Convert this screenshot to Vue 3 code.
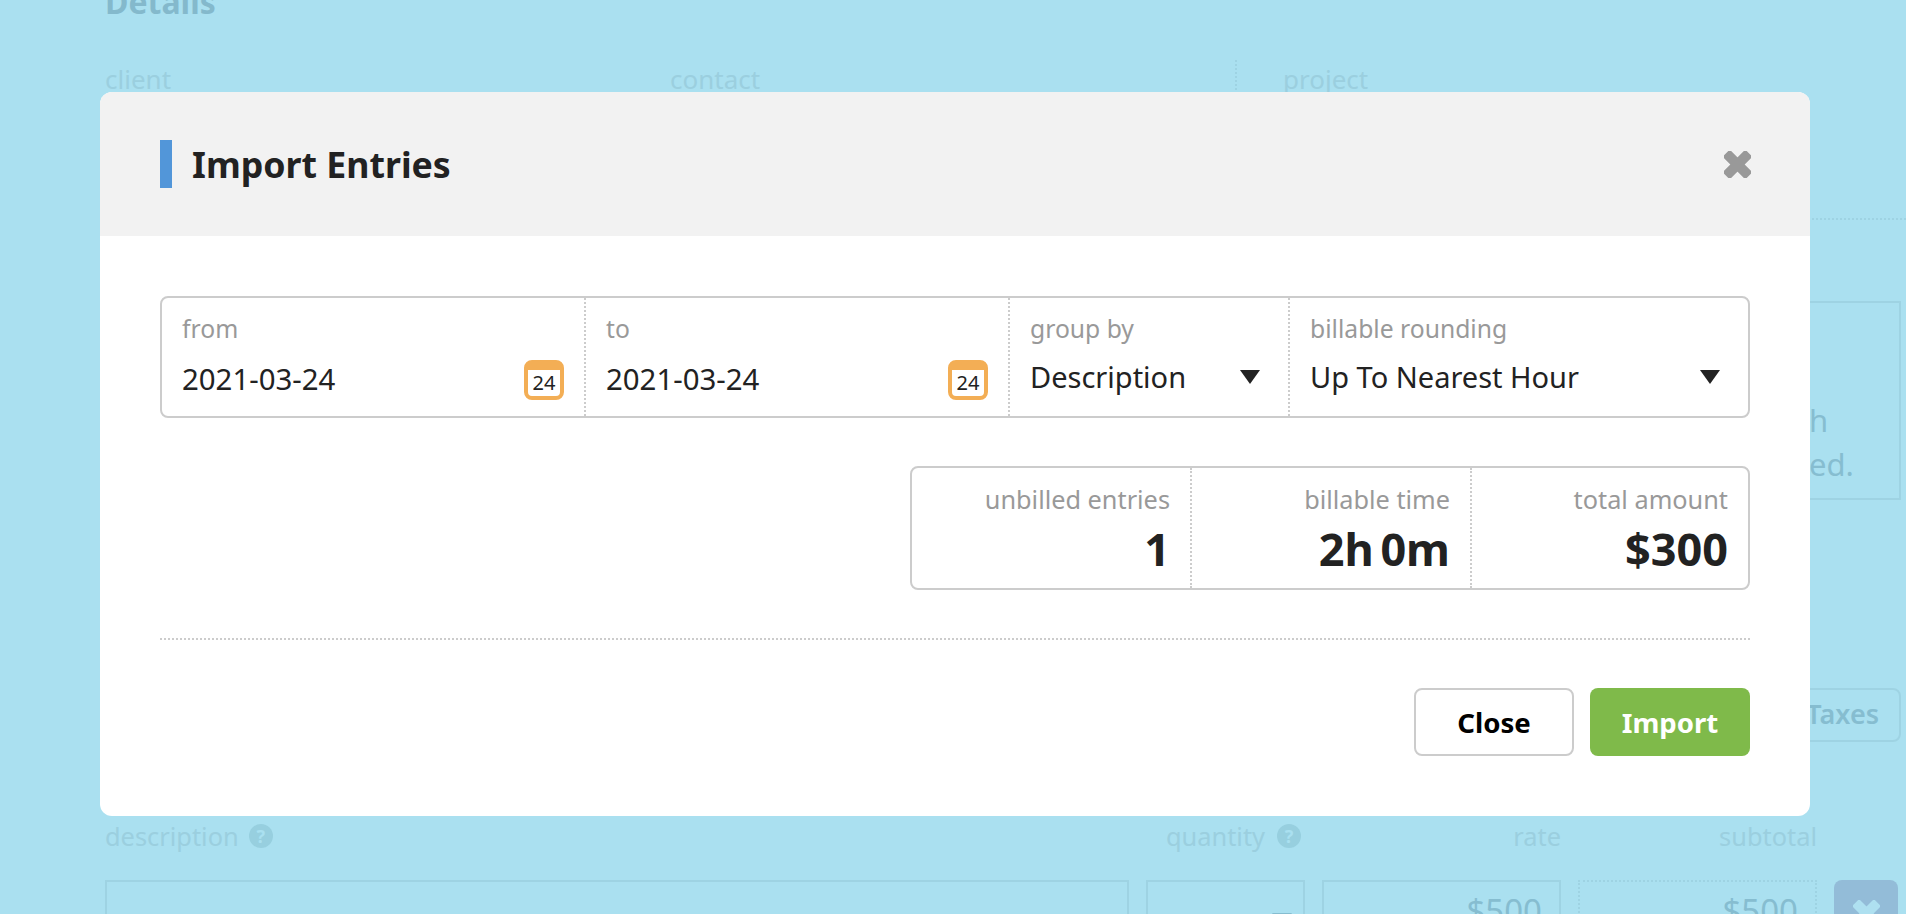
<script setup>
const fields = [
  { label: 'from', value: '2021-03-24' },
  { label: 'to', value: '2021-03-24' },
]
const selects = [
  { label: 'group by', value: 'Description' },
  { label: 'billable rounding', value: 'Up To Nearest Hour' },
]
const stats = [
  { label: 'unbilled entries', value: '1' },
  { label: 'billable time', value: '2h 0m' },
  { label: 'total amount', value: '$300' },
]
</script>

<template>
  <div class="page">
    <div class="sheet">
      <h2 class="details">Details</h2>
      <div class="info">
        <div class="info-cell"><span class="bg-label">client</span></div>
        <div class="info-cell"><span class="bg-label">contact</span></div>
        <div class="info-cell project"><span class="bg-label">project</span></div>
      </div>
      <div class="empty-box">
        <div>h</div>
        <div>ed.</div>
      </div>
      <div class="taxes">Taxes</div>
      <div class="table-grid heads">
        <div class="bg-label head-left">description <span class="help">?</span></div>
        <div class="bg-label head-right qty">quantity <span class="help">?</span></div>
        <div class="bg-label head-right">rate</div>
        <div class="bg-label head-right">subtotal</div>
      </div>
      <div class="table-grid cells">
        <div class="cell"></div>
        <div class="cell"><i class="bg-caret"></i></div>
        <div class="cell money">$500</div>
        <div class="cell money dotted">$500</div>
        <div class="remove">
          <svg width="27" height="27" viewBox="0 0 27 27"><g fill="#aee0f0" transform="rotate(45 13.5 13.5)"><rect x="-2" y="8.5" width="31" height="10" rx="2"/><rect x="8.5" y="-2" width="10" height="31" rx="2"/></g></svg>
        </div>
      </div>
    </div>

    <section class="modal">
      <header class="modal-head">
        <div class="title-wrap">
          <span class="accent"></span>
          <h1 class="title">Import Entries</h1>
        </div>
        <svg class="close-x" width="27" height="27" viewBox="0 0 27 27"><g fill="#999999" transform="rotate(45 13.5 13.5)"><rect x="-2.5" y="8.5" width="32" height="10" rx="2"/><rect x="8.5" y="-2.5" width="10" height="32" rx="2"/></g></svg>
      </header>

      <div class="modal-body">
        <div class="group filters">
          <div v-for="f in fields" :key="f.label" class="filter date">
            <div class="label">{{ f.label }}</div>
            <div class="date-row">
              <span class="date-value">{{ f.value }}</span>
              <span class="cal"><span class="cal-day">24</span></span>
            </div>
          </div>
          <div v-for="s in selects" :key="s.label" class="filter select">
            <div class="label">{{ s.label }}</div>
            <div class="select-row">
              <span class="select-value">{{ s.value }}</span>
              <i class="caret"></i>
            </div>
          </div>
        </div>

        <div class="group stats">
          <div v-for="s in stats" :key="s.label" class="stat">
            <div class="label">{{ s.label }}</div>
            <div class="stat-value">{{ s.value }}</div>
          </div>
        </div>

        <div class="rule"></div>

        <div class="actions">
          <button class="btn btn-close">Close</button>
          <button class="btn btn-import">Import</button>
        </div>
      </div>
    </section>
  </div>
</template>

<style>
html, body { margin: 0; padding: 0; background: #aae0f0; }
</style>

<style scoped>
.page {
  position: relative;
  height: 914px;
  overflow: hidden;
  background: #aae0f0;
  font-family: "Noto Sans", "Open Sans", sans-serif;
  color: #222;
}
.sheet { margin-top: -18px; padding-left: 105px; }
.details {
  margin: 0;
  height: 40px;
  line-height: 40px;
  font-size: 32px;
  font-weight: 700;
  color: #84b9cc;
}
.info {
  margin-top: 38px;
  height: 158px;
  display: grid;
  grid-template-columns: 565px 565px 1fr;
  border-bottom: 2px dotted #9ed3e3;
}
.info-cell { padding-top: 3px; }
.project { border-left: 2px dotted #9ed3e3; padding-left: 46px; }
.bg-label { font-size: 26px; line-height: 32px; color: #9bcfdf; }
.empty-box {
  margin: 81px 5px 0 auto;
  width: 500px;
  height: 199px;
  box-sizing: border-box;
  border: 2px solid #9ed3e3;
  padding: 95px 0 0 406px;
  font-size: 31px;
  line-height: 44px;
  color: #86bdd0;
}
.taxes {
  margin: 188px 5px 0 auto;
  width: 300px;
  height: 54px;
  box-sizing: border-box;
  border: 2px solid #9ed3e3;
  border-radius: 8px;
  padding-right: 20px;
  text-align: right;
  font-size: 27px;
  line-height: 48px;
  font-weight: 600;
  color: #86bdd0;
}
.table-grid {
  display: grid;
  grid-template-columns: 1024px 159px 239px 239px 64px;
  column-gap: 17px;
  width: 1793px;
}
.heads { margin-top: 78px; height: 60px; }
.heads .bg-label { font-size: 25.4px; }
.head-left { display: flex; align-items: flex-start; gap: 10px; }
.head-right { text-align: right; }
.qty { display: flex; justify-content: flex-end; gap: 12px; padding-right: 4px; }
.heads .help {
  width: 24px;
  height: 24px;
  margin-top: 4px;
  border-radius: 50%;
  background: #97cfdf;
  color: #aae0f0;
  font-size: 18px;
  line-height: 24px;
  font-weight: 700;
  text-align: center;
}
.cells { height: 120px; }
.cell {
  box-sizing: border-box;
  border: 2px solid #9ed3e3;
  display: flex;
  justify-content: flex-end;
}
.money {
  padding: 7px 17px 0 0;
  font-size: 33px;
  line-height: 44px;
  color: #86bdd0;
}
.dotted { border-style: dotted; }
.bg-caret {
  margin: 31px 11px 0 0;
  width: 0;
  height: 0;
  border-left: 10px solid transparent;
  border-right: 10px solid transparent;
  border-top: 14px solid #86bdd0;
}
.remove {
  border-radius: 8px;
  background: #93bcd8;
  display: flex;
  justify-content: center;
  padding-top: 20px;
  box-sizing: border-box;
}

.modal {
  position: absolute;
  left: 100px;
  top: 92px;
  width: 1710px;
  height: 724px;
  background: #fff;
  border-radius: 12px;
  overflow: hidden;
}
.modal-head {
  height: 144px;
  box-sizing: border-box;
  padding: 0 60px;
  background: #f2f2f2;
  display: flex;
  align-items: center;
  justify-content: space-between;
}
.title-wrap { display: flex; align-items: center; gap: 20px; }
.accent { width: 12px; height: 48px; background: #5296d9; }
.title { margin: 0; font-size: 35.7px; line-height: 48px; font-weight: 700; color: #222; }
.close-x { margin-right: -1px; }
.modal-body { padding: 60px 60px 0; }
.group {
  box-sizing: border-box;
  border: 2px solid #ccc;
  border-radius: 8px;
  display: grid;
}
.filters { height: 122px; grid-template-columns: 422px 424px 280px 460px; }
.filter { padding: 0 20px; min-width: 0; }
.filter + .filter { border-left: 2px dotted #ccc; }
.filter.select { padding-right: 28px; }
.label { font-size: 24.7px; line-height: 32px; color: #999; white-space: nowrap; }
.filter .label { margin-top: 15px; }
.date-row { margin-top: 12px; height: 44px; display: flex; align-items: center; justify-content: space-between; }
.date-value { font-size: 29.4px; line-height: 44px; color: #222; }
.cal {
  width: 40px;
  height: 40px;
  margin-top: 2px;
  box-sizing: border-box;
  border: 4px solid #f3ae55;
  border-top-width: 10px;
  border-radius: 8px;
  background: #fff;
  display: flex;
  align-items: center;
  justify-content: center;
}
.cal-day { font-size: 20px; line-height: 24px; color: #222; }
.select-row { margin-top: 10px; height: 44px; display: flex; align-items: center; justify-content: space-between; }
.select-value { font-size: 29px; line-height: 44px; color: #222; white-space: nowrap; }
.caret {
  width: 0;
  height: 0;
  border-left: 10px solid transparent;
  border-right: 10px solid transparent;
  border-top: 14px solid #222;
}
.stats {
  margin: 48px 0 0 auto;
  width: 840px;
  height: 124px;
  grid-template-columns: 278px 280px 278px;
}
.stat { padding: 15px 20px 0 0; text-align: right; }
.stat + .stat { border-left: 2px dotted #ccc; }
.stat .label { font-size: 25.3px; }
.stat-value { margin-top: 4px; font-size: 45px; line-height: 60px; font-weight: 700; color: #222; word-spacing: -5px; }
.rule { margin-top: 48px; border-top: 2px dotted #ccc; }
.actions { margin-top: 48px; display: flex; justify-content: flex-end; gap: 16px; }
.btn {
  width: 160px;
  height: 68px;
  box-sizing: border-box;
  border-radius: 8px;
  font-family: inherit;
  font-size: 27.6px;
  font-weight: 700;
  padding: 0;
}
.btn-close { background: #fff; border: 2px solid #ccc; color: #000; }
.btn-import { background: #7fba4a; border: 0; color: #fff; }
</style>
